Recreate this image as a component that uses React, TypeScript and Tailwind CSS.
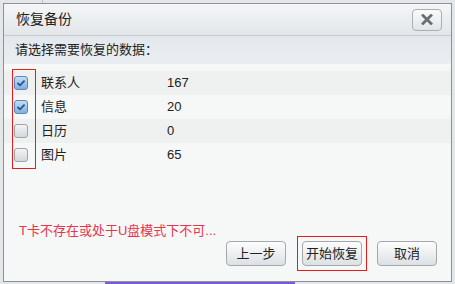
import React from 'react';

const rows = [
  { id: 1, label: '联系人', count: 167, checked: true },
  { id: 2, label: '信息', count: 20, checked: true },
  { id: 3, label: '日历', count: 0, checked: false },
  { id: 4, label: '图片', count: 65, checked: false },
];

const font = { fontFamily: '"Liberation Sans", "Noto Sans CJK SC", sans-serif' };

const Checkbox: React.FC<{ checked: boolean }> = ({ checked }) =>
  checked ? (
    <div className="w-[14px] h-[14px] rounded-[3px] border border-[#5a87b5] bg-gradient-to-b from-[#c4ddf4] to-[#7fb0de] flex items-center justify-center">
      <svg width="10" height="8" viewBox="0 0 10 8">
        <path d="M1.5 4 L4 6.3 L8.6 1.6" fill="none" stroke="#24548c" strokeWidth="1.8" />
      </svg>
    </div>
  ) : (
    <div className="w-[14px] h-[14px] rounded-[3px] border border-[#9ea4aa] bg-gradient-to-b from-[#f2f4f5] to-[#d3d8dc]" />
  );

const Button: React.FC<{ children: React.ReactNode }> = ({ children }) => (
  <button className="w-[60px] h-[25px] rounded-[4px] border border-[#a2a8ae] bg-gradient-to-b from-[#fcfdfd] to-[#dde1e4] text-[13px] text-[#222] leading-none">
    {children}
  </button>
);

export default function App() {
  return (
    <div className="w-[455px] h-[284px] bg-[#e4e7ea] flex flex-col overflow-hidden" style={font}>
      {/* page behind the dialog */}
      <div className="h-[3px] flex">
        <div className="ml-[42px] w-px h-full bg-[#b9bec3]" />
      </div>

      <div className="flex px-[3px]">
        <div className="w-[449px] h-[279px] border border-[#8c9298] bg-[#f6f8f8] flex flex-col">
          {/* Title bar */}
          <div className="h-[32px] shrink-0 flex items-center justify-between pl-[12px] pr-[9px] bg-gradient-to-b from-[#f4f6f7] to-[#e2e6e9] border-b border-[#c5cbd0]">
            <span className="text-[14px] text-[#222]">恢复备份</span>
            <button className="w-[30px] h-[22px] rounded-[4px] border border-[#a9aeb3] bg-gradient-to-b from-[#fafbfb] to-[#e1e4e7] flex items-center justify-center">
              <svg width="12" height="11" viewBox="0 0 12 11">
                <path d="M2 1.5 L10 9.5 M10 1.5 L2 9.5" stroke="#6a6f74" strokeWidth="2.8" strokeLinecap="square" />
              </svg>
            </button>
          </div>

          {/* Sub header */}
          <div className="h-[28px] shrink-0 flex items-center pl-[11px] bg-gradient-to-b from-[#e2e8ed] to-[#eaeef1] text-[13px] text-[#222]">
            请选择需要恢复的数据：
          </div>

          {/* Rows */}
          <div className="relative mt-[7px]">
            {rows.map((row, i) => (
              <div
                key={row.id}
                className={`h-[24px] flex items-center text-[13px] text-[#222] ${i % 2 === 0 ? 'bg-[#eff1f1]' : 'bg-[#f6f7f7]'}`}
              >
                <div className="w-[37px] pl-[10px] shrink-0">
                  <Checkbox checked={row.checked} />
                </div>
                <span className="w-[126px] shrink-0">{row.label}</span>
                <span>{row.count}</span>
              </div>
            ))}
            <div className="absolute left-[8px] top-[-2px] w-[24px] h-[100px] border border-[#e51c1c]" />
          </div>

          {/* Footer */}
          <div className="mt-auto flex items-end justify-between pl-[15px] pr-[14px] pb-[10px]">
            <span className="text-[13px] text-[#e8344c] mb-[31px]">T卡不存在或处于U盘模式下不可...</span>
            <div className="flex items-center gap-[10px]">
              <Button>上一步</Button>
              <div className="border border-[#e51c1c] p-[4px] ml-[1px]">
                <Button>开始恢复</Button>
              </div>
              <Button>取消</Button>
            </div>
          </div>
        </div>
      </div>

      <div className="h-[2px] flex">
        <div className="ml-[105px] w-[190px] h-full bg-[#7a5ad8]" />
      </div>
    </div>
  );
}
